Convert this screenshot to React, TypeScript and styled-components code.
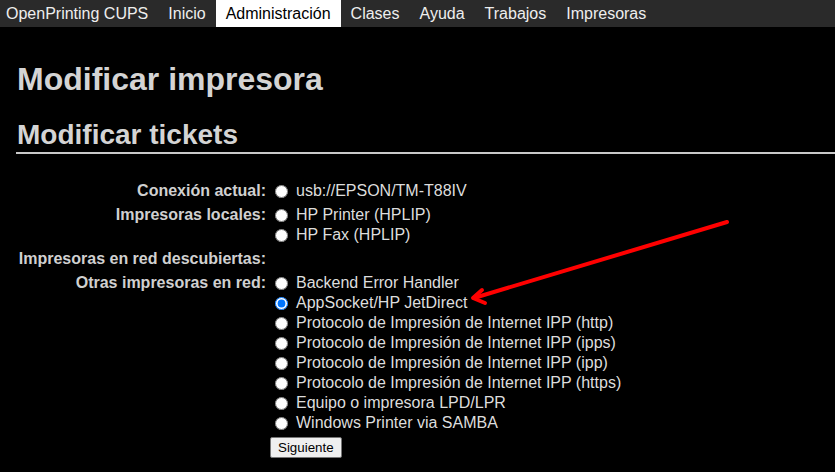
import styled, { createGlobalStyle } from 'styled-components';

const GlobalStyle = createGlobalStyle`
  html, body {
    margin: 0;
    padding: 0;
    background: #000;
    color: #ddd;
    font-family: "Liberation Sans", Arial, sans-serif;
  }
`;

const Page = styled.div`
  position: relative;
  min-height: 472px;
  overflow: hidden;
`;

const NavBar = styled.nav`
  display: flex;
  height: 27px;
  background: #2a2a2a;
  font-size: 16px;
`;

const NavItem = styled.a<{ $active?: boolean; $brand?: boolean }>`
  display: flex;
  align-items: center;
  padding: ${(p) => (p.$brand ? '0 10px 0 6px' : '0 10px')};
  color: ${(p) => (p.$active ? '#000' : '#eee')};
  background: ${(p) => (p.$active ? '#fff' : 'transparent')};
  text-decoration: none;
`;

const Content = styled.div`
  padding: 0 0 0 16px;
`;

const Title = styled.h1`
  margin: 34px 0 0 1px;
  font-size: 32px;
  line-height: 37px;
  font-weight: bold;
  color: #d4d4d4;
`;

const Subtitle = styled.h2`
  margin: 21px 0 0 0;
  padding: 0 0 1px 1px;
  font-size: 28px;
  line-height: 32px;
  font-weight: bold;
  color: #d4d4d4;
  border-bottom: 2px solid #c8c8c8;
`;

const FormGrid = styled.div`
  display: grid;
  grid-template-columns: 250px auto;
  column-gap: 4px;
  row-gap: 4px;
  margin-top: 27px;
  font-size: 16px;
`;

const Label = styled.div`
  text-align: right;
  font-weight: bold;
  color: #d0d0d0;
  line-height: 20px;
  white-space: nowrap;
`;

const Options = styled.div`
  display: flex;
  flex-direction: column;
  min-height: 20px;
`;

const Option = styled.label`
  display: flex;
  align-items: center;
  height: 20px;
  color: #ddd;
  white-space: nowrap;
`;

const Radio = styled.input`
  width: 13px;
  height: 13px;
  margin: 0 8px 0 5px;
`;

const SubmitRow = styled.div`
  grid-column: 2;
`;

const SubmitButton = styled.button`
  font-family: "Liberation Sans", Arial, sans-serif;
  font-size: 13.33px;
  height: 21px;
  padding: 1px 7px;
  background: #efefef;
  color: #000;
  border: 1px solid #767676;
  border-radius: 2px;
`;

const Arrow = styled.svg`
  position: absolute;
  left: 0;
  top: 0;
  width: 835px;
  height: 472px;
  pointer-events: none;
`;

type Row = { label: string; options: string[] };

const rows: Row[] = [
  { label: 'Conexión actual:', options: ['usb://EPSON/TM-T88IV'] },
  { label: 'Impresoras locales:', options: ['HP Printer (HPLIP)', 'HP Fax (HPLIP)'] },
  { label: 'Impresoras en red descubiertas:', options: [] },
  {
    label: 'Otras impresoras en red:',
    options: [
      'Backend Error Handler',
      'AppSocket/HP JetDirect',
      'Protocolo de Impresión de Internet IPP (http)',
      'Protocolo de Impresión de Internet IPP (ipps)',
      'Protocolo de Impresión de Internet IPP (ipp)',
      'Protocolo de Impresión de Internet IPP (https)',
      'Equipo o impresora LPD/LPR',
      'Windows Printer via SAMBA',
    ],
  },
];

const navLinks = ['Inicio', 'Administración', 'Clases', 'Ayuda', 'Trabajos', 'Impresoras'];

export default function App() {
  return (
    <Page>
      <GlobalStyle />
      <NavBar>
        <NavItem $brand>OpenPrinting CUPS</NavItem>
        {navLinks.map((l) => (
          <NavItem key={l} $active={l === 'Administración'}>
            {l}
          </NavItem>
        ))}
      </NavBar>
      <Content>
        <Title>Modificar impresora</Title>
        <Subtitle>Modificar tickets</Subtitle>
        <FormGrid>
          {rows.map((r) => [
            <Label key={r.label}>{r.label}</Label>,
            <Options key={r.label + '-o'}>
              {r.options.map((o) => (
                <Option key={o}>
                  <Radio
                    type="radio"
                    name="device"
                    defaultChecked={o === 'AppSocket/HP JetDirect'}
                  />
                  {o}
                </Option>
              ))}
            </Options>,
          ])}
          <SubmitRow>
            <SubmitButton>Siguiente</SubmitButton>
          </SubmitRow>
        </FormGrid>
      </Content>
      <Arrow viewBox="0 0 835 472">
        <g stroke="#ff0000" strokeWidth="4" strokeLinecap="round" fill="none">
          <line x1="727" y1="222" x2="474" y2="298" />
          <polyline points="482,290 473,298 485,303" strokeLinejoin="round" />
        </g>
      </Arrow>
    </Page>
  );
}
